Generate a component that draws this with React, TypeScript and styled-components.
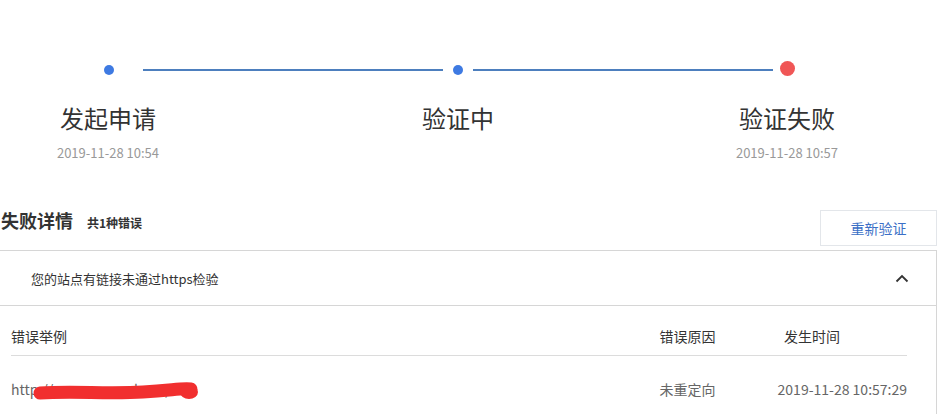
import React from "react";
import styled, { createGlobalStyle } from "styled-components";

const Global = createGlobalStyle`
  html, body { margin: 0; padding: 0; background: #fff; }
  body { font-family: "Noto Sans CJK SC", "Noto Sans", sans-serif; color: #333; }
  * { box-sizing: border-box; }
`;

const Page = styled.div`
  width: 937px;
  padding-top: 62px;
`;

const DotRow = styled.div`
  display: flex;
  align-items: center;
  height: 16px;
  padding-left: 104px;
`;

const Dot = styled.span<{ $red?: boolean }>`
  flex: none;
  width: ${(p) => (p.$red ? 15 : 10)}px;
  height: ${(p) => (p.$red ? 15 : 10)}px;
  border-radius: 50%;
  background: ${(p) => (p.$red ? "#f05656" : "#3e7ae2")};
  margin-bottom: ${(p) => (p.$red ? 4 : 0)}px;
`;

const Connector = styled.span<{ $before: number; $after: number }>`
  flex: none;
  width: 300px;
  height: 2px;
  background: #4d7fbe;
  margin-left: ${(p) => p.$before}px;
  margin-right: ${(p) => p.$after}px;
`;

const LabelRow = styled.div`
  display: grid;
  grid-template-columns: 216px 484px 174px;
  margin-top: 27px;
`;

const StepCell = styled.div`
  display: flex;
  flex-direction: column;
  align-items: center;
`;

const StepLabel = styled.div`
  font-size: 24px;
  line-height: 26px;
  color: #333;
`;

const StepDate = styled.div`
  margin-top: 13px;
  font-size: 13px;
  line-height: 18px;
  color: #999;
`;

const TitleRow = styled.div`
  display: flex;
  justify-content: space-between;
  align-items: flex-start;
  margin-top: 48px;
  padding-left: 1px;
`;

const TitleGroup = styled.div`
  display: flex;
  align-items: baseline;
  gap: 14px;
`;

const Title = styled.h2`
  margin: 0;
  font-size: 18px;
  line-height: 20px;
  font-weight: 700;
  color: #333;
`;

const SubTitle = styled.span`
  font-size: 12px;
  font-weight: 700;
  color: #333;
`;

const RetryButton = styled.button`
  width: 117px;
  height: 36px;
  border: 1px solid #e3e6ea;
  background: #fff;
  color: #3b6fc6;
  font-family: inherit;
  font-size: 14px;
  cursor: pointer;
`;

const Panel = styled.section`
  margin-top: 4px;
  border-top: 1px solid #d6d6d6;
  border-right: 1px solid #d6d6d6;
`;

const PanelHeader = styled.div`
  display: flex;
  align-items: center;
  justify-content: space-between;
  height: 55px;
  padding: 0 27px 0 31px;
  border-bottom: 1px solid #d6d6d6;
  font-size: 13px;
  color: #333;
`;

const Table = styled.div`
  padding: 0 29px 0 11px;
`;

const Row = styled.div<{ $head?: boolean }>`
  display: grid;
  grid-template-columns: 1fr 115px 132px;
  column-gap: 30px;
  align-items: center;
  height: ${(p) => (p.$head ? 50 : 66)}px;
  padding-top: ${(p) => (p.$head ? 10 : 0)}px;
  border-bottom: ${(p) => (p.$head ? "1px solid #dcdcdc" : "none")};
  font-size: 14px;
  color: ${(p) => (p.$head ? "#333" : "#666")};
`;

const Cell = styled.div<{ $align?: "left" | "center" | "right"; $pad?: number }>`
  text-align: ${(p) => p.$align ?? "left"};
  padding-left: ${(p) => p.$pad ?? 0}px;
  white-space: nowrap;
`;

const UrlCell = styled.div`
  position: relative;
  white-space: nowrap;
`;

const Scribble = styled.svg`
  position: absolute;
  left: 20px;
  top: -1px;
`;

const Chevron = () => (
  <svg width="14" height="9" viewBox="0 0 14 9">
    <polyline points="1.5,7.5 7,2 12.5,7.5" fill="none" stroke="#333" strokeWidth="1.8" />
  </svg>
);

export default function App() {
  return (
    <>
      <Global />
      <Page>
        <DotRow>
          <Dot />
          <Connector $before={29} $after={10} />
          <Dot />
          <Connector $before={10} $after={7} />
          <Dot $red />
        </DotRow>
        <LabelRow>
          <StepCell>
            <StepLabel>发起申请</StepLabel>
            <StepDate>2019-11-28 10:54</StepDate>
          </StepCell>
          <StepCell>
            <StepLabel>验证中</StepLabel>
          </StepCell>
          <StepCell>
            <StepLabel>验证失败</StepLabel>
            <StepDate>2019-11-28 10:57</StepDate>
          </StepCell>
        </LabelRow>
        <TitleRow>
          <TitleGroup>
            <Title>失败详情</Title>
            <SubTitle>共1种错误</SubTitle>
          </TitleGroup>
          <RetryButton>重新验证</RetryButton>
        </TitleRow>
        <Panel>
          <PanelHeader>
            <span>您的站点有链接未通过https检验</span>
            <Chevron />
          </PanelHeader>
          <Table>
            <Row $head>
              <Cell>错误举例</Cell>
              <Cell $align="center">错误原因</Cell>
              <Cell $pad={9}>发生时间</Cell>
            </Row>
            <Row>
              <UrlCell>
                http://www.example.cn/
                <Scribble width="172" height="26" viewBox="0 0 172 26">
                  <path
                    d="M9 15 C 40 13, 80 16, 112 14 S 150 10, 160 11"
                    fill="none"
                    stroke="#f12f2f"
                    strokeWidth="13"
                    strokeLinecap="round"
                  />
                  <ellipse cx="158" cy="14" rx="9" ry="7" fill="#f12f2f" />
                </Scribble>
              </UrlCell>
              <Cell $align="center">未重定向</Cell>
              <Cell $align="right">2019-11-28 10:57:29</Cell>
            </Row>
          </Table>
        </Panel>
      </Page>
    </>
  );
}
